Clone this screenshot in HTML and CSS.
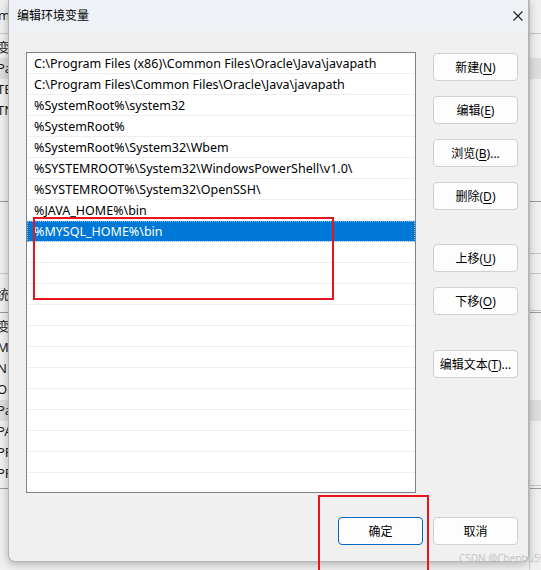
FILE: index.html
```html
<!DOCTYPE html>
<html lang="zh-CN">
  <head>
    <meta charset="UTF-8" />
    <title>编辑环境变量</title>
    <link rel="stylesheet" href="styles.css">
  </head>
  <body>
    <!-- 背后的“环境变量”窗口，只露出左右两条边 -->
    <div class="backwin">
      <div class="back-top">m</div>
      <div class="back-list">
        <div class="back-row">变</div>
        <div class="back-row hl">Pa</div>
        <div class="back-row">TE</div>
        <div class="back-row">TN</div>
      </div>
      <div class="back-caption">统</div>
      <div class="back-list second">
        <div class="back-row">变</div>
        <div class="back-row">M</div>
        <div class="back-row">N</div>
        <div class="back-row">O</div>
        <div class="back-row hl">Pa</div>
        <div class="back-row">PA</div>
        <div class="back-row">PF</div>
        <div class="back-row">PF</div>
      </div>
      <div class="back-right">
        <div class="back-line l1"></div>
        <div class="back-line l2"></div>
        <div class="back-line l3"></div>
        <div class="back-line l4"></div>
      </div>
    </div>

    <div class="dialog">
      <div class="titlebar">
        <span class="title">编辑环境变量</span>
        <span class="close">
          <svg width="10" height="10" viewBox="0 0 10 10">
            <path d="M0.5 0.5 L9.5 9.5 M9.5 0.5 L0.5 9.5" stroke="#1b1b1b" stroke-width="1.1" fill="none" />
          </svg>
        </span>
      </div>

      <div class="dialog-body">
        <div class="main">
          <div class="path-list">
            <div class="row">C:\Program Files (x86)\Common Files\Oracle\Java\javapath</div>
            <div class="row">C:\Program Files\Common Files\Oracle\Java\javapath</div>
            <div class="row">%SystemRoot%\system32</div>
            <div class="row">%SystemRoot%</div>
            <div class="row">%SystemRoot%\System32\Wbem</div>
            <div class="row">%SYSTEMROOT%\System32\WindowsPowerShell\v1.0\</div>
            <div class="row">%SYSTEMROOT%\System32\OpenSSH\</div>
            <div class="row">%JAVA_HOME%\bin</div>
            <div class="row selected">%MYSQL_HOME%\bin</div>
            <div class="row"></div>
            <div class="row"></div>
            <div class="row"></div>
            <div class="row"></div>
            <div class="row"></div>
            <div class="row"></div>
            <div class="row"></div>
            <div class="row"></div>
            <div class="row"></div>
            <div class="row"></div>
            <div class="row"></div>
            <div class="row"></div>
          </div>

          <div class="side">
            <button class="btn">新建(<u>N</u>)</button>
            <button class="btn">编辑(<u>E</u>)</button>
            <button class="btn">浏览(<u>B</u>)...</button>
            <button class="btn">删除(<u>D</u>)</button>
            <button class="btn gap-move">上移(<u>U</u>)</button>
            <button class="btn">下移(<u>O</u>)</button>
            <button class="btn gap-text">编辑文本(<u>T</u>)...</button>
          </div>
        </div>

        <div class="footer">
          <button class="btn default">确定</button>
          <button class="btn">取消</button>
        </div>
      </div>
    </div>

    <!-- 红框标注 -->
    <div class="mark mark-row"></div>
    <div class="mark mark-ok"></div>

    <div class="watermark">CSDN @Chenhu59</div>
  </body>
</html>
```

FILE: styles.css
```css
body {
  margin: 0;
  width: 541px;
  height: 570px;
  overflow: hidden;
  position: relative;
  background-color: #e6e6e6;
  font-family: 'Noto Sans', 'Noto Sans CJK SC', sans-serif;
  font-size: 12px;
  color: #000;
}

/* 背后窗口 */
.backwin {
  position: absolute;
  left: 0;
  top: 0;
  width: 541px;
  height: 570px;
  background-color: #f0f0f0;
  color: #1a1a1a;
  font-size: 13px;
}
.back-top {
  height: 33px;
  line-height: 30px;
  margin-left: -2px;
  border-bottom: 1px solid #c8c8c8;
}
.back-list {
  margin-top: 3px;
  height: 164px;
  border-bottom: 1px solid #9a9a9a;
}
.back-row {
  height: 21px;
  line-height: 21px;
  margin-left: -3px;
}
.back-row.hl {
  background-color: #dedede;
}
.back-caption {
  margin-top: 71px;
  height: 38px;
  line-height: 40px;
  margin-left: -4px;
  border-top: 1px solid #c8c8c8;
  border-bottom: 1px solid #9a9a9a;
}
.back-list.second {
  margin-top: 3px;
  height: 172px;
}
.back-right {
  position: absolute;
  left: 529px;
  top: 0;
  width: 12px;
  height: 570px;
  border-left: 1px solid #d0d0d0;
}
.back-line {
  position: absolute;
  left: 0;
  right: 0;
  border-top: 1px solid #c4c4c4;
}
.back-line.l1 { top: 33px; }
.back-line.l2 { top: 253px; }
.back-line.l3 { top: 310px; }
.back-line.l4 { top: 485px; }

/* 对话框 */
.dialog {
  position: absolute;
  left: 8px;
  top: 0;
  width: 521px;
  height: 562px;
  background-color: #f0f0f0;
  border: 1px solid #b4b4b4;
  border-top: none;
  border-radius: 0 0 7px 7px;
  box-shadow: 0 2px 10px rgba(0, 0, 0, 0.28);
  box-sizing: border-box;
  display: flex;
  flex-direction: column;
}
.titlebar {
  height: 31px;
  background-color: #eef2f7;
  display: flex;
  align-items: center;
  justify-content: space-between;
  padding: 0 5px 0 8px;
  border-radius: 0 7px 0 0;
}
.title {
  font-size: 12px;
  margin-top: -2px;
}
.close {
  width: 10px;
  height: 10px;
  display: flex;
}
.dialog-body {
  flex: 1;
  padding: 21px 10px 0 17px;
  display: flex;
  flex-direction: column;
}
.main {
  display: flex;
  gap: 17px;
}

/* 路径列表 */
.path-list {
  width: 390px;
  height: 441px;
  box-sizing: border-box;
  border: 1px solid #828282;
  background-color: white;
  overflow: hidden;
  font-size: 12.5px;
}
.row {
  height: 20px;
  line-height: 22px;
  border-bottom: 1px solid #efefef;
  padding-left: 7px;
  white-space: nowrap;
}
.row.selected {
  background-color: #0078d7;
  color: white;
  outline: 1px dotted #7fb9ea;
  outline-offset: -1px;
}

/* 按钮 */
.side {
  display: flex;
  flex-direction: column;
  gap: 15px;
  padding-top: 1px;
}
.btn {
  width: 85px;
  height: 28px;
  padding: 0;
  background-color: #fdfdfd;
  border: 1px solid #d0d0d0;
  border-radius: 4px;
  font-family: inherit;
  font-size: 12px;
  color: #000;
}
.btn u {
  text-underline-offset: 2px;
}
.btn.gap-move {
  margin-top: 19px;
}
.btn.gap-text {
  margin-top: 20px;
}
.footer {
  margin-top: 24px;
  display: flex;
  justify-content: flex-end;
  gap: 10px;
}
.btn.default {
  border-color: #0067c0;
}

/* 标注 */
.mark {
  position: absolute;
  border: 2px solid #e8141c;
  box-sizing: border-box;
}
.mark-row {
  left: 33px;
  top: 217px;
  width: 301px;
  height: 83px;
}
.mark-ok {
  left: 318px;
  top: 495px;
  width: 111px;
  height: 80px;
}

.watermark {
  position: absolute;
  left: 459px;
  top: 551px;
  font-size: 10px;
  color: #c4c4c4;
  white-space: nowrap;
}
```
